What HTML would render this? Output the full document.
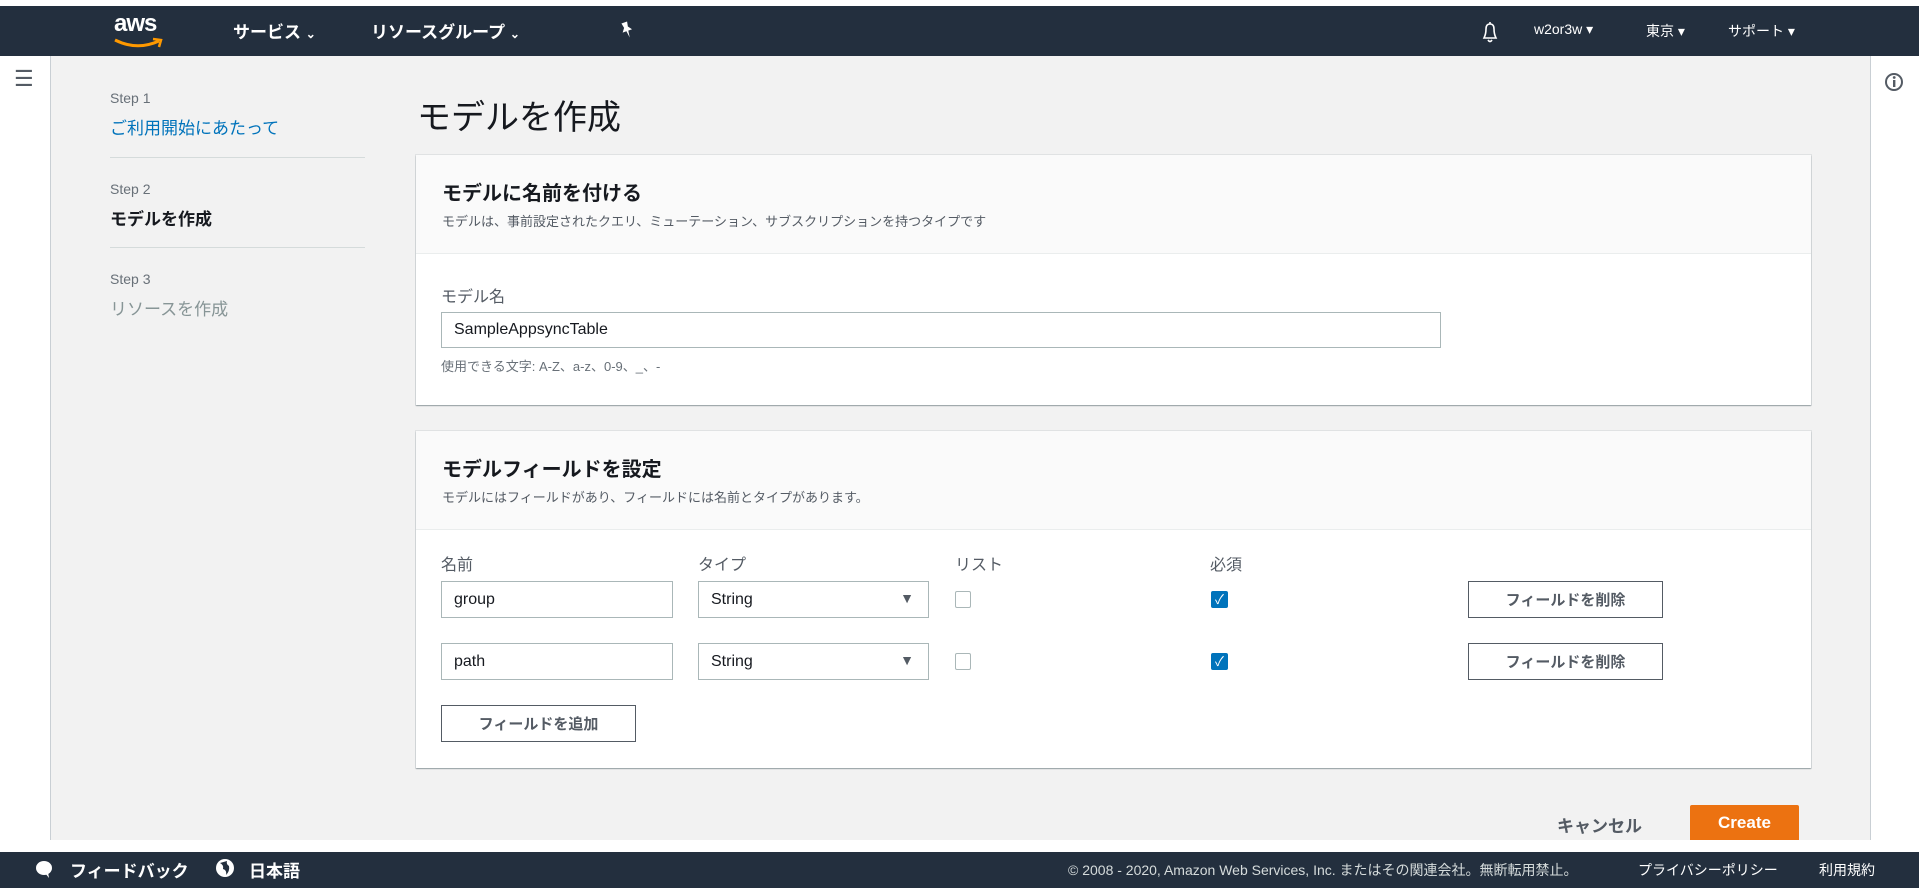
<!DOCTYPE html>
<html><head><meta charset="utf-8"><style>
*{box-sizing:border-box;margin:0;padding:0}
body{width:1919px;height:888px;position:relative;overflow:hidden;background:#fff;font-family:"Liberation Sans","Noto Sans CJK JP",sans-serif;color:#16191f}
.a{position:absolute;white-space:nowrap}
.nav{position:absolute;left:0;top:6px;width:1919px;height:50px;background:#232f3e}
.nt{position:absolute;color:#fff;font-size:17px;top:12px}
.nr{position:absolute;color:#fff;font-size:14px;top:15px}
.main{position:absolute;left:50px;top:56px;width:1821px;height:784px;background:#f2f2f2;border-left:1px solid #c9cfd4;border-right:1px solid #c9cfd4}
.panel{position:absolute;left:416px;width:1395px;background:#fff;box-shadow:0 1px 1px rgba(0,28,36,.35),0 0 0 1px rgba(0,28,36,.07)}
.ph{background:#fafafa;border-bottom:1px solid #eaeded}
.inp{position:absolute;border:1px solid #aab7b8;background:#fff;font-size:16px;padding-left:12px;display:flex;align-items:center}
.btn{position:absolute;border:1px solid #545b64;background:#fff;font-size:15px;font-weight:bold;color:#545b64;display:flex;align-items:center;justify-content:center}
.cb{position:absolute;width:16px;height:17px;border:1px solid #aab7b8;border-radius:2px;background:#fff}
.ck{position:absolute;width:17px;height:17px;border-radius:2px;background:#0073bb;color:#fff;font-size:13px;text-align:center;line-height:17px}
.lbl{position:absolute;font-size:16px;color:#545b64}
.foot{position:absolute;left:0;top:852px;width:1919px;height:36px;background:#232f3e;color:#fff}
</style></head><body>
<div class="nav">
 <div class="a" style="left:114px;top:4px;color:#fff;font-size:24px;font-weight:bold;letter-spacing:-1px">aws</div>
 <svg class="a" style="left:113px;top:31px" width="52" height="12" viewBox="0 0 52 12"><path d="M2 3 Q24 14 46 4" stroke="#ff9900" stroke-width="3" fill="none"/><path d="M40 2 L48 3 L46 10" stroke="#ff9900" stroke-width="2.5" fill="none"/></svg>
 <div class="nt" style="left:233px;font-weight:bold">サービス <span style="font-size:12px">⌄</span></div>
 <div class="nt" style="left:371px;font-weight:bold">リソースグループ <span style="font-size:12px">⌄</span></div>
 <svg class="a" style="left:619px;top:15px" width="16" height="20" viewBox="0 0 16 20"><path d="M5 1 L11 1 L10 6 L13 10 L9 10 L8 17 L7 10 L3 10 L6 6 Z" fill="#fff" transform="rotate(-20 8 9)"/></svg>
 <svg class="a" style="left:1480px;top:14px" width="20" height="24" viewBox="0 0 20 24"><path d="M10 2 L10 4 M4 18 Q6 14 6 9 Q6 4 10 4 Q14 4 14 9 Q14 14 16 18 Z M8 20 Q10 23 12 20" stroke="#fff" stroke-width="1.6" fill="none"/></svg>
 <div class="nr" style="left:1534px">w2or3w ▾</div>
 <div class="nr" style="left:1646px">東京 ▾</div>
 <div class="nr" style="left:1728px">サポート ▾</div>
</div>
<div class="a" style="left:14px;top:66px;font-size:22px;color:#545b64">☰</div>
<svg class="a" style="left:1884px;top:72px" width="20" height="20" viewBox="0 0 20 20"><circle cx="10" cy="10" r="8" stroke="#545b64" stroke-width="2" fill="none"/><rect x="9" y="8" width="2.4" height="7" fill="#545b64"/><circle cx="10.2" cy="5.5" r="1.4" fill="#545b64"/></svg>
<div class="main"></div>
<div class="a" style="left:110px;top:90px;font-size:14px;color:#687078">Step 1</div>
<div class="a" style="left:110px;top:114px;font-size:17px;color:#0073bb">ご利用開始にあたって</div>
<div class="a" style="left:110px;top:157px;width:255px;height:1px;background:#d5dbdb"></div>
<div class="a" style="left:110px;top:181px;font-size:14px;color:#687078">Step 2</div>
<div class="a" style="left:110px;top:205px;font-size:17px;font-weight:bold">モデルを作成</div>
<div class="a" style="left:110px;top:247px;width:255px;height:1px;background:#d5dbdb"></div>
<div class="a" style="left:110px;top:271px;font-size:14px;color:#687078">Step 3</div>
<div class="a" style="left:110px;top:295px;font-size:17px;color:#879596">リソースを作成</div>
<div class="a" style="left:417px;top:90px;font-size:34px;color:#16191f">モデルを作成</div>

<div class="panel" style="top:155px;height:250px">
 <div class="ph" style="height:99px;position:relative">
  <div class="a" style="left:26px;top:22px;font-size:20px;font-weight:bold">モデルに名前を付ける</div>
  <div class="a" style="left:26px;top:56px;font-size:13px;color:#545b64">モデルは、事前設定されたクエリ、ミューテーション、サブスクリプションを持つタイプです</div>
 </div>
 <div class="lbl" style="left:25px;top:128px">モデル名</div>
 <div class="inp" style="left:25px;top:157px;width:1000px;height:36px">SampleAppsyncTable</div>
 <div class="a" style="left:25px;top:201px;font-size:13px;color:#687078">使用できる文字: A-Z、a-z、0-9、_、-</div>
</div>

<div class="panel" style="top:431px;height:337px">
 <div class="ph" style="height:99px;position:relative">
  <div class="a" style="left:26px;top:22px;font-size:20px;font-weight:bold">モデルフィールドを設定</div>
  <div class="a" style="left:26px;top:56px;font-size:13px;color:#545b64">モデルにはフィールドがあり、フィールドには名前とタイプがあります。</div>
 </div>
 <div class="lbl" style="left:25px;top:120px">名前</div>
 <div class="lbl" style="left:282px;top:120px">タイプ</div>
 <div class="lbl" style="left:539px;top:120px">リスト</div>
 <div class="lbl" style="left:794px;top:120px">必須</div>
 <div class="inp" style="left:25px;top:150px;width:232px;height:37px">group</div>
 <div class="inp" style="left:282px;top:150px;width:231px;height:37px">String<span class="a" style="right:14px;top:8px;font-size:14px;color:#545b64">▼</span></div>
 <div class="cb" style="left:539px;top:160px"></div>
 <div class="ck" style="left:795px;top:160px">✓</div>
 <div class="btn" style="left:1052px;top:150px;width:195px;height:37px">フィールドを削除</div>
 <div class="inp" style="left:25px;top:212px;width:232px;height:37px">path</div>
 <div class="inp" style="left:282px;top:212px;width:231px;height:37px">String<span class="a" style="right:14px;top:8px;font-size:14px;color:#545b64">▼</span></div>
 <div class="cb" style="left:539px;top:222px"></div>
 <div class="ck" style="left:795px;top:222px">✓</div>
 <div class="btn" style="left:1052px;top:212px;width:195px;height:37px">フィールドを削除</div>
 <div class="btn" style="left:25px;top:274px;width:195px;height:37px">フィールドを追加</div>
</div>

<div class="a" style="left:1557px;top:812px;font-size:17px;font-weight:bold;color:#545b64">キャンセル</div>
<div class="a" style="left:1690px;top:805px;width:109px;height:35px;background:#ec7211;border-radius:2px 2px 0 0;color:#fff;font-size:17px;font-weight:bold;text-align:center;line-height:36px">Create</div>

<div class="foot">
 <svg class="a" style="left:34px;top:7px" width="20" height="20" viewBox="0 0 20 20"><ellipse cx="10" cy="9" rx="8" ry="7" fill="#fff"/><path d="M11 14 L15 19 L14 13Z" fill="#fff"/></svg>
 <div class="a" style="left:70px;top:5px;font-size:17px;font-weight:bold">フィードバック</div>
 <svg class="a" style="left:215px;top:6px" width="20" height="20" viewBox="0 0 20 20"><circle cx="10" cy="10" r="9" fill="#fff"/><path d="M5 5 Q9 7 8 11 Q12 12 11 17 Q15 13 14 8 Q11 6 12 3" fill="#232f3e"/></svg>
 <div class="a" style="left:249px;top:5px;font-size:17px;font-weight:bold">日本語</div>
 <div class="a" style="left:1068px;top:8px;font-size:14px;color:#d5dbdb">© 2008 - 2020, Amazon Web Services, Inc. またはその関連会社。無断転用禁止。</div>
 <div class="a" style="left:1638px;top:8px;font-size:14px">プライバシーポリシー</div>
 <div class="a" style="left:1819px;top:8px;font-size:14px">利用規約</div>
</div>
</body></html>
